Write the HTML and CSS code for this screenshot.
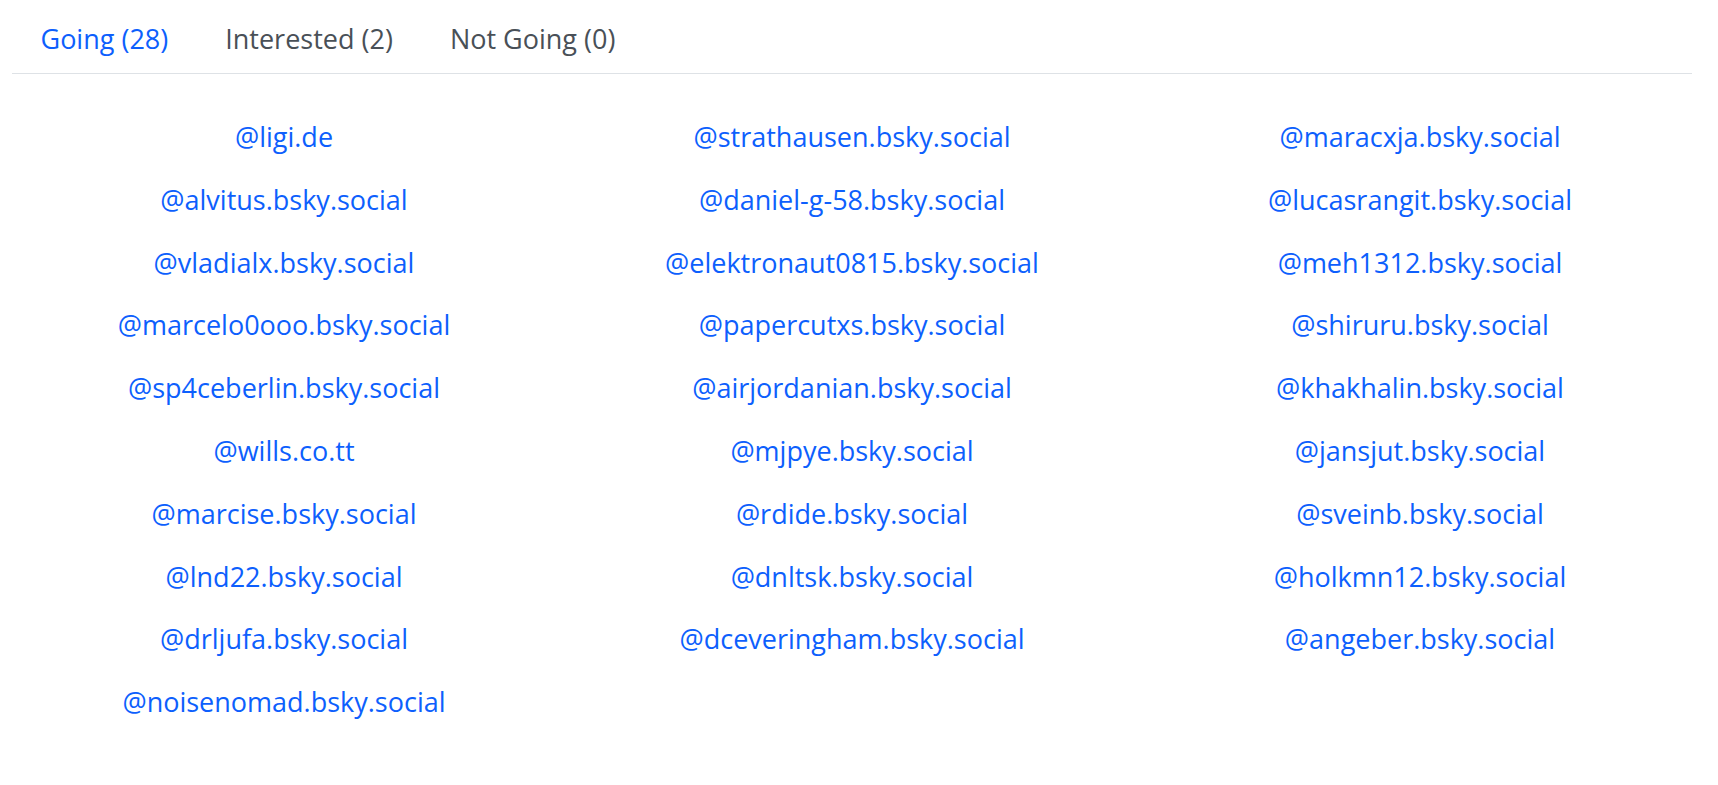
FILE: index.html
```html
<!DOCTYPE html>
<html lang="en">
<head>
<meta charset="utf-8">
<title>Attendees</title>
<link rel="stylesheet" href="styles.css">
</head>
<body>
<div class="page">
  <nav class="tabs">
    <a class="tab active" href="#">Going (28)</a>
    <a class="tab" href="#">Interested (2)</a>
    <a class="tab" href="#">Not Going (0)</a>
  </nav>
  <div class="grid">
    <div class="col">
      <a class="handle" href="#">@ligi.de</a>
      <a class="handle" href="#">@alvitus.bsky.social</a>
      <a class="handle" href="#">@vladialx.bsky.social</a>
      <a class="handle" href="#">@marcelo0ooo.bsky.social</a>
      <a class="handle" href="#">@sp4ceberlin.bsky.social</a>
      <a class="handle" href="#">@wills.co.tt</a>
      <a class="handle" href="#">@marcise.bsky.social</a>
      <a class="handle" href="#">@lnd22.bsky.social</a>
      <a class="handle" href="#">@drljufa.bsky.social</a>
      <a class="handle" href="#">@noisenomad.bsky.social</a>
    </div>
    <div class="col">
      <a class="handle" href="#">@strathausen.bsky.social</a>
      <a class="handle" href="#">@daniel-g-58.bsky.social</a>
      <a class="handle" href="#">@elektronaut0815.bsky.social</a>
      <a class="handle" href="#">@papercutxs.bsky.social</a>
      <a class="handle" href="#">@airjordanian.bsky.social</a>
      <a class="handle" href="#">@mjpye.bsky.social</a>
      <a class="handle" href="#">@rdide.bsky.social</a>
      <a class="handle" href="#">@dnltsk.bsky.social</a>
      <a class="handle" href="#">@dceveringham.bsky.social</a>
    </div>
    <div class="col">
      <a class="handle" href="#">@maracxja.bsky.social</a>
      <a class="handle" href="#">@lucasrangit.bsky.social</a>
      <a class="handle" href="#">@meh1312.bsky.social</a>
      <a class="handle" href="#">@shiruru.bsky.social</a>
      <a class="handle" href="#">@khakhalin.bsky.social</a>
      <a class="handle" href="#">@jansjut.bsky.social</a>
      <a class="handle" href="#">@sveinb.bsky.social</a>
      <a class="handle" href="#">@holkmn12.bsky.social</a>
      <a class="handle" href="#">@angeber.bsky.social</a>
    </div>
  </div>
</div>
</body>
</html>
```
FILE: styles.css
```css
* { box-sizing: border-box; }
html, body {
  margin: 0;
  padding: 0;
  background: #ffffff;
}
body {
  font-family: "Open Sans", "Noto Sans", sans-serif;
  font-size: 27px;
  color: #495057;
}
.page {
  width: 1680px;
  margin-left: 12px;
}
.tabs {
  display: flex;
  border-bottom: 1px solid #dee2e6;
  height: 74px;
  padding-top: 20px;
}
.tab {
  display: block;
  padding: 0 28.5px;
  line-height: 38px;
  height: 38px;
  color: #495057;
  text-decoration: none;
}
.tab.active { color: #0d5ffd; }
.grid {
  display: grid;
  grid-template-columns: repeat(3, 1fr);
  margin: 0 -12px;
  padding-top: 44px;
}
.col {
  display: flex;
  flex-direction: column;
  align-items: center;
  padding: 0 12px;
}
.handle {
  display: block;
  line-height: 38px;
  height: 38px;
  margin-bottom: 24.8px;
  color: #0d5ffd;
  text-decoration: none;
  text-align: center;
}
```
